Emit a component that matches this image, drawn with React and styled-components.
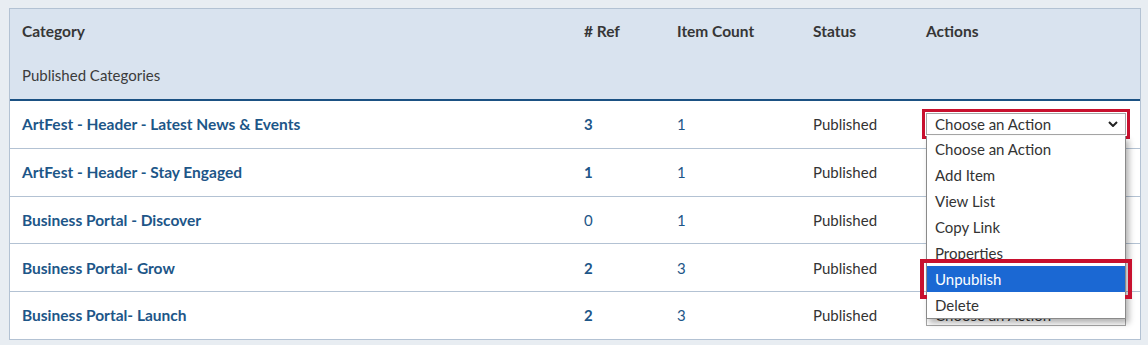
import React from 'react';
import styled, { createGlobalStyle } from 'styled-components';

const GlobalStyle = createGlobalStyle`
  html, body {
    margin: 0;
    padding: 0;
    background: #e8edf2;
    font-family: Lato, "Noto Sans", sans-serif;
  }
`;

const rows = [
  { name: 'ArtFest - Header - Latest News & Events', ref: 3, count: 1 },
  { name: 'ArtFest - Header - Stay Engaged', ref: 1, count: 1 },
  { name: 'Business Portal - Discover', ref: 0, count: 1 },
  { name: 'Business Portal- Grow', ref: 2, count: 3 },
  { name: 'Business Portal- Launch', ref: 2, count: 3 },
];

const options = ['Choose an Action', 'Add Item', 'View List', 'Copy Link', 'Properties', 'Unpublish', 'Delete'];

const App = () => {
  return (
    <>
      <GlobalStyle />
      <Page>
        <Table>
          <Head>
            <HeadRow>
              <HeadCell>Category</HeadCell>
              <HeadCell># Ref</HeadCell>
              <HeadCell>Item Count</HeadCell>
              <HeadCell>Status</HeadCell>
              <HeadCell>Actions</HeadCell>
            </HeadRow>
            <SubTitle>Published Categories</SubTitle>
          </Head>

          {rows.map((r, i) => (
            <Row key={i}>
              <NameCell>{r.name}</NameCell>
              <RefCell $bold={r.ref > 0}>{r.ref}</RefCell>
              <CountCell>{r.count}</CountCell>
              <StatusCell>Published</StatusCell>
              <ActionCell>
                <Select $open={i === 0}>
                  <span>Choose an Action</span>
                  <Chevron viewBox="0 0 10 6">
                    <path d="M1 1 L5 5 L9 1" />
                  </Chevron>
                </Select>
                {i === 0 && (
                  <Menu>
                    {options.map((o) => (
                      <MenuItem key={o} $active={o === 'Unpublish'}>{o}</MenuItem>
                    ))}
                  </Menu>
                )}
              </ActionCell>
            </Row>
          ))}
        </Table>
      </Page>
    </>
  );
};

export default App;

const Page = styled.div`
  padding: 8px 7px 0 9px;
  height: 345px;
  box-sizing: border-box;
  overflow: hidden;
`;

const Table = styled.div`
  background: white;
  border: 1px solid #b3c2d3;
  border-bottom: none;
`;

const columns = '562px 93px 136px 113px 1fr';

const Head = styled.div`
  background: #d9e3ef;
  border-bottom: 2px solid #1b5183;
  height: 92px;
  box-sizing: border-box;
  padding-top: 12px;
`;

const HeadRow = styled.div`
  display: grid;
  grid-template-columns: ${columns};
`;

const HeadCell = styled.div`
  padding-left: 12px;
  font-size: 15.5px;
  font-weight: 700;
  line-height: 20px;
  color: #363636;
`;

const SubTitle = styled.div`
  margin-top: 24px;
  padding-left: 12px;
  font-size: 15px;
  line-height: 20px;
  color: #3b3b3b;
`;

const Row = styled.div`
  display: grid;
  grid-template-columns: ${columns};
  align-items: center;
  height: 47.75px;
  box-sizing: border-box;
  border-bottom: 1px solid #b3c2d3;
`;

const Cell = styled.div`
  padding-left: 12px;
  font-size: 15px;
  line-height: 20px;
`;

const NameCell = styled(Cell)`
  color: #1d5688;
  font-weight: 700;
  font-size: 15.5px;
`;

const RefCell = styled(Cell)`
  color: #1d5688;
  font-weight: ${(p) => (p.$bold ? 700 : 400)};
`;

const CountCell = styled(Cell)`
  color: #1d5688;
`;

const StatusCell = styled(Cell)`
  color: #333;
`;

const ActionCell = styled.div`
  position: relative;
  padding-left: 12px;
`;

const Select = styled.div`
  width: 200px;
  height: 22px;
  box-sizing: border-box;
  border: 1px solid #a6a6a6;
  background: white;
  display: flex;
  align-items: center;
  justify-content: space-between;
  padding: 0 7px 0 8px;
  font-size: 15px;
  color: #333;
  outline: ${(p) => (p.$open ? '3px solid #c8102e' : 'none')};
  outline-offset: 1px;
`;

const Chevron = styled.svg`
  width: 10px;
  height: 6px;
  fill: none;
  stroke: #222;
  stroke-width: 2;
`;

const Menu = styled.div`
  position: absolute;
  left: 12px;
  top: 23px;
  width: 200px;
  box-sizing: border-box;
  background: white;
  border: 1px solid #8a8a8a;
  border-top: none;
  box-shadow: 3px 4px 6px rgba(0, 0, 0, 0.3);
  z-index: 2;
`;

const MenuItem = styled.div`
  height: 26px;
  line-height: 26px;
  padding-left: 8px;
  font-size: 15px;
  color: ${(p) => (p.$active ? 'white' : '#333')};
  background: ${(p) => (p.$active ? '#1b68d3' : 'white')};
  outline: ${(p) => (p.$active ? '4px solid #c8102e' : 'none')};
  outline-offset: 3px;
  position: relative;
`;
